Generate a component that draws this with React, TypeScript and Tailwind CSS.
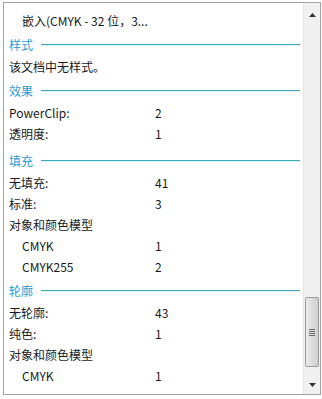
const font = { fontFamily: '"Noto Sans CJK SC", "Noto Sans", sans-serif' };

type Row = { label: string; value?: string; sub?: boolean };
type Section = { title: string; mt: string; rows: Row[] };

const sections: Section[] = [
  { title: "样式", mt: "mt-[2px]", rows: [{ label: "该文档中无样式。" }] },
  {
    title: "效果",
    mt: "mt-[2px]",
    rows: [
      { label: "PowerClip:", value: "2" },
      { label: "透明度:", value: "1" },
    ],
  },
  {
    title: "填充",
    mt: "mt-[5px]",
    rows: [
      { label: "无填充:", value: "41" },
      { label: "标准:", value: "3" },
      { label: "对象和颜色模型" },
      { label: "CMYK", value: "1", sub: true },
      { label: "CMYK255", value: "2", sub: true },
    ],
  },
  {
    title: "轮廓",
    mt: "mt-[2px]",
    rows: [
      { label: "无轮廓:", value: "43" },
      { label: "纯色:", value: "1" },
      { label: "对象和颜色模型" },
      { label: "CMYK", value: "1", sub: true },
    ],
  },
];

function ItemRow({ row }: { row: Row }) {
  return (
    <div className="flex h-[21px] items-center text-[12px] text-[#1a1a1a]">
      <span className={row.sub ? "w-[151px] pl-[18px]" : "w-[151px] pl-[5px]"}>{row.label}</span>
      {row.value && <span>{row.value}</span>}
    </div>
  );
}

function Header({ title, mt }: { title: string; mt: string }) {
  return (
    <div className={`${mt} flex h-[23px] items-center pl-[5px] pr-[3px]`}>
      <span className="text-[12px] text-[#2a9bd6]">{title}</span>
      <div className="ml-[8px] h-px flex-1 bg-[#3aa8c2] shadow-[0_1px_0_#dff3f7]" />
    </div>
  );
}

export default function App() {
  return (
    <div className="h-[399px] w-[322px] bg-white pl-[3px] pt-[2px]" style={font}>
      <div className="flex h-[393px] w-[318px] border border-[#a3a3a3] bg-white">
        <div className="flex-1 overflow-hidden pt-[7px]">
          <div className="flex h-[21px] items-center pl-[18px] text-[12px] text-[#1a1a1a]">
            嵌入(CMYK - 32 位，3...
          </div>
          {sections.map((s) => (
            <div key={s.title}>
              <Header title={s.title} mt={s.mt} />
              {s.rows.map((r, i) => (
                <ItemRow key={i} row={r} />
              ))}
            </div>
          ))}
        </div>
        <div className="flex w-[17px] flex-col items-center border-l border-[#e6e6e6] bg-[#f0f0f0]">
          <div className="flex h-[17px] w-full items-center justify-center pt-[6px]">
            <svg width="7" height="4" viewBox="0 0 7 4">
              <path d="M0 4 L3.5 0 L7 4 Z" fill="#333" />
            </svg>
          </div>
          <div className="mt-[277px] flex h-[70px] w-[14px] items-center justify-center rounded-[2px] border border-[#9b9b9b] bg-gradient-to-r from-[#ececec] via-[#dcdcdc] to-[#d0d0d0]">
            <div className="flex flex-col gap-[1px]">
              <div className="h-px w-[6px] bg-[#6d6d6d]" />
              <div className="h-px w-[6px] bg-[#6d6d6d]" />
              <div className="h-px w-[6px] bg-[#6d6d6d]" />
              <div className="h-px w-[6px] bg-[#6d6d6d]" />
            </div>
          </div>
          <div className="mt-[16px] flex w-full justify-center">
            <svg width="7" height="4" viewBox="0 0 7 4">
              <path d="M0 0 L3.5 4 L7 0 Z" fill="#333" />
            </svg>
          </div>
        </div>
      </div>
    </div>
  );
}
